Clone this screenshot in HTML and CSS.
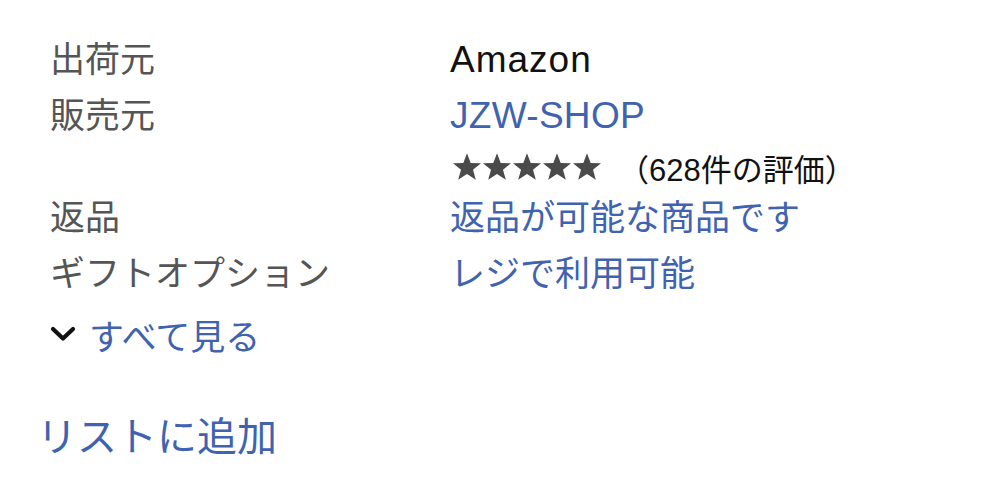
FILE: index.html
```html
<!DOCTYPE html>
<html lang="ja">
<head>
<meta charset="utf-8">
<link rel="stylesheet" href="styles.css">
</head>
<body>
<div class="page">
  <div class="details">
    <div class="label row">出荷元</div>
    <div class="value row plain"><span class="latin wide">Amazon</span></div>
    <div class="label row">販売元</div>
    <div class="value row link"><span class="latin">JZW-SHOP</span></div>
    <div class="label stars-row"></div>
    <div class="value stars-row">
      <span class="stars">
        <svg viewBox="0 0 150 30" width="152" height="30">
          <g fill="#4a4a4a">
            <path id="s" d="M15 1.2 L18.7 10.9 L29 11.3 L21 17.8 L23.8 27.8 L15 22 L6.2 27.8 L9 17.8 L1 11.3 L11.3 10.9 Z"/>
            <use href="#s" x="30"/>
            <use href="#s" x="60"/>
            <use href="#s" x="90"/>
            <use href="#s" x="120"/>
          </g>
        </svg>
      </span>
      <span class="count">（628件の評価）</span>
    </div>
    <div class="label row">返品</div>
    <div class="value row link">返品が可能な商品です</div>
    <div class="label row">ギフトオプション</div>
    <div class="value row link">レジで利用可能</div>
  </div>
  <div class="see-all">
    <svg class="chevron" viewBox="0 0 26 18" width="26" height="18">
      <path d="M3 4 L13 13.5 L23 4" fill="none" stroke="#111" stroke-width="4.2" stroke-linecap="round" stroke-linejoin="round"/>
    </svg>
    <span class="link">すべて見る</span>
  </div>
  <div class="add-list link">リストに追加</div>
</div>
</body>
</html>
```

FILE: styles.css
```css
html, body {
  margin: 0;
  padding: 0;
  background: #ffffff;
}
body {
  font-family: "Liberation Sans", "Noto Sans CJK JP", sans-serif;
  font-size: 35px;
  color: #555555;
}
.page {
  padding: 32px 0 0 50px;
}
.details {
  display: grid;
  grid-template-columns: 400px auto;
}
.row {
  height: 56px;
  line-height: 56px;
  white-space: nowrap;
}
.latin {
  font-size: 37px;
  letter-spacing: 0.3px;
}
.latin.wide {
  letter-spacing: 1px;
}
.label {
  color: #555555;
}
.plain {
  color: #111111;
}
.link {
  color: #3f63b0;
}
.stars-row {
  height: 46px;
  display: flex;
  align-items: center;
}
.stars {
  display: flex;
  margin-left: 1px;
}
.count {
  font-size: 31px;
  color: #111111;
  margin-left: 15px;
}
.see-all {
  display: flex;
  align-items: center;
  height: 56px;
  margin-top: 4px;
}
.chevron {
  margin-right: 13px;
}
.add-list {
  margin-left: -13px;
  margin-top: 47px;
  font-size: 40px;
  line-height: 56px;
}
```
